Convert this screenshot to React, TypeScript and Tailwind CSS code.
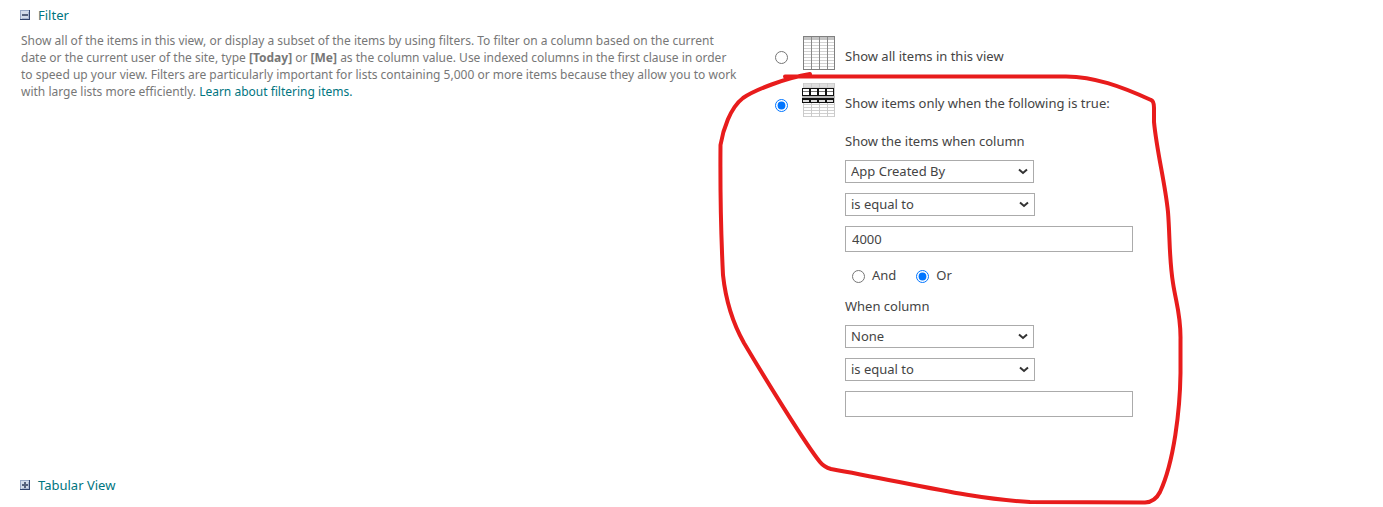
import React, { useState } from 'react';

const GRID_X = [1, 9, 17, 25, 32];

function ToggleIcon({ expanded }: { expanded: boolean }) {
  return (
    <svg width="10" height="10" viewBox="0 0 10 10" aria-hidden="true" shapeRendering="crispEdges">
      <rect width="10" height="10" fill="#98a8c6" />
      <path d="M9 0h1v10H0V9h9z" fill="#33456e" />
      <rect x="1" y="1" width="8" height="8" fill="#d3dbea" />
      <path d="M8 2h1v7H2V8h6z" fill="#a9b6d0" />
      <rect x="2" y="4" width="6" height="2" fill="#56627d" />
      {!expanded && <rect x="4" y="2" width="2" height="6" fill="#56627d" />}
    </svg>
  );
}

function AllItemsIcon() {
  return (
    <svg width="34" height="34" viewBox="0 0 34 34" aria-hidden="true" shapeRendering="crispEdges">
      <rect x="1" y="0" width="32" height="34" fill="#fff" />
      <rect x="1" y="1" width="32" height="3" fill="#c4c4c4" />
      {[6, 9, 12, 15, 18, 21, 24, 27, 30].map(y => (
        <rect key={y} x="1" y={y} width="32" height="1" fill="#d2d2d2" />
      ))}
      {GRID_X.map(x => (
        <rect key={x} x={x} y="0" width="1" height="34" fill="#8a8a8a" />
      ))}
      <path d="M1 0h32v34H1zM2 1v32h30V1z" fill="#808080" fillRule="evenodd" />
    </svg>
  );
}

function FilteredItemsIcon() {
  return (
    <svg width="34" height="34" viewBox="0 0 34 34" aria-hidden="true" shapeRendering="crispEdges">
      <rect x="1" y="0" width="32" height="34" fill="#fff" />
      <rect x="1" y="1" width="32" height="3" fill="#dedede" />
      {[0, 4, 21, 24, 27, 30, 33].map(y => (
        <rect key={y} x="1" y={y} width="32" height="1" fill="#d0d0d0" />
      ))}
      {GRID_X.map(x => (
        <rect key={x} x={x} y="0" width="1" height="34" fill="#cacaca" />
      ))}
      <rect x="0" y="5" width="32" height="8" fill="#111" />
      <rect x="0" y="13" width="33" height="2" fill="#b4b4b4" />
      <rect x="0" y="15" width="32" height="5" fill="#111" />
      {[1, 9, 17, 25].map(x => (
        <g key={x}>
          <rect x={x} y="6" width="6" height="2" fill="#fff" />
          <rect x={x} y="8" width="6" height="1" fill="#777" />
          <rect x={x} y="9" width="6" height="3" fill="#fff" />
          <rect x={x} y="17" width="6" height="2" fill="#ddd" />
        </g>
      ))}
    </svg>
  );
}

interface SectionToggleProps {
  label: string;
  expanded: boolean;
}

function SectionToggle({ label, expanded }: SectionToggleProps) {
  return (
    <button
      type="button"
      aria-expanded={expanded}
      className="flex items-center gap-2 text-[13px] leading-5 text-[#00757f] cursor-pointer"
    >
      <ToggleIcon expanded={expanded} />
      <span>{label}</span>
    </button>
  );
}

interface DropdownProps {
  label: string;
  value: string;
  options: string[];
}

function Dropdown({ label, value, options }: DropdownProps) {
  return (
    <div className="relative w-full">
      <select
        aria-label={label}
        defaultValue={value}
        className="block h-[23px] w-full appearance-none border border-[#ababab] bg-white pl-[5px] pr-5"
      >
        {options.map(option => (
          <option key={option}>{option}</option>
        ))}
      </select>
      <svg
        width="10"
        height="7"
        viewBox="0 0 10 7"
        fill="none"
        stroke="#333"
        strokeWidth="2"
        className="pointer-events-none absolute right-[6px] top-2"
        aria-hidden="true"
      >
        <path d="M1 1.500L5 5L9 1.500" />
      </svg>
    </div>
  );
}

interface FilterClauseProps {
  title: string;
  column: string;
  value: string;
}

function FilterClause({ title, column, value }: FilterClauseProps) {
  const [text, setText] = useState(value);

  return (
    <fieldset>
      <legend className="mb-[9px] leading-5">{title}</legend>
      <div className="flex flex-col items-start gap-[10px]">
        <div className="w-[189px]">
          <Dropdown label="Column" value={column} options={['None', 'App Created By']} />
        </div>
        <div className="w-[190px]">
          <Dropdown label="Operator" value="is equal to" options={['is equal to', 'is not equal to']} />
        </div>
        <input
          type="text"
          aria-label="Value"
          value={text}
          onChange={e => setText(e.target.value)}
          className="h-[26px] w-72 border border-[#ababab] bg-white px-[6px]"
        />
      </div>
    </fieldset>
  );
}

export default function App() {
  const [mode, setMode] = useState('filtered');
  const [join, setJoin] = useState('or');

  return (
    <main className="relative min-h-screen bg-white font-['Noto_Sans',sans-serif] text-[13px] text-[#444]">
      <section className="flex items-start">
        <div className="w-[775px] shrink-0 pl-5 pt-[5px]">
          <SectionToggle label="Filter" expanded />
          <p className="mt-[7px] ml-px w-[719px] text-[12px] leading-[17px] text-[#777]">
            Show all of the items in this view, or display a subset of the items by using filters. To filter on a
            column based on the current date or the current user of the site, type <b>[Today]</b> or <b>[Me]</b> as the
            column value. Use indexed columns in the first clause in order to speed up your view. Filters are
            particularly important for lists containing 5,000 or more items because they allow you to work with large
            lists more efficiently.{' '}
            <a href="#filtering" className="text-[#00757f]">Learn about filtering items.</a>
          </p>
        </div>

        <div className="grow pt-9">
          <label className="flex h-[34px] items-center">
            <input
              type="radio"
              name="mode"
              className="mt-2 mr-[14px] size-[13px]"
              checked={mode === 'all'}
              onChange={() => setMode('all')}
            />
            <AllItemsIcon />
            <span className="ml-[9px] mt-2">Show all items in this view</span>
          </label>
          <label className="mt-[13px] flex h-[34px] items-center">
            <input
              type="radio"
              name="mode"
              className="mt-[10px] mr-[14px] size-[13px]"
              checked={mode === 'filtered'}
              onChange={() => setMode('filtered')}
            />
            <FilteredItemsIcon />
            <span className="ml-[9px] mt-2">Show items only when the following is true:</span>
          </label>

          <div className="ml-[70px] pt-[14px]">
            <FilterClause title="Show the items when column" column="App Created By" value="4000" />
            <div className="mt-[14px] mb-[10px] ml-[7px] flex h-5 items-center gap-5">
              <label className="flex items-center gap-[7px]">
                <input
                  type="radio"
                  name="join"
                  className="mt-px size-[13px]"
                  checked={join === 'and'}
                  onChange={() => setJoin('and')}
                />
                And
              </label>
              <label className="flex items-center gap-[7px]">
                <input
                  type="radio"
                  name="join"
                  className="mt-px size-[13px]"
                  checked={join === 'or'}
                  onChange={() => setJoin('or')}
                />
                Or
              </label>
            </div>
            <FilterClause title="When column" column="None" value="" />
          </div>
        </div>
      </section>

      <section className="pl-5 pt-[58px]">
        <SectionToggle label="Tabular View" expanded={false} />
      </section>

      {/* Hand-drawn marker around the filter form */}
      <svg
        width="470"
        height="440"
        viewBox="715 67 470 440"
        className="pointer-events-none absolute left-[715px] top-[67px]"
        fill="none"
        stroke="#e81c1c"
        strokeWidth="4"
        strokeLinecap="round"
        strokeLinejoin="round"
        aria-hidden="true"
      >
        <path d="M785 76.500H1066C1095 77 1120 86 1151 100Q1154 101 1154 108V122C1157 153 1165 182 1168 212C1170 237 1169 258 1173 283C1176 303 1181 315 1180.500 340V373C1180 410 1174 462 1160 492Q1155 502 1145 502.500L1030 502C970 499 910 483 831 469Q824 467 820 462C806 445 763 375 744 343C735 327 726 303 723 275C721 235 720 205 720.500 145C723 130 730 108 743 98C755 90 785 78 810 74" />
      </svg>
    </main>
  );
}
